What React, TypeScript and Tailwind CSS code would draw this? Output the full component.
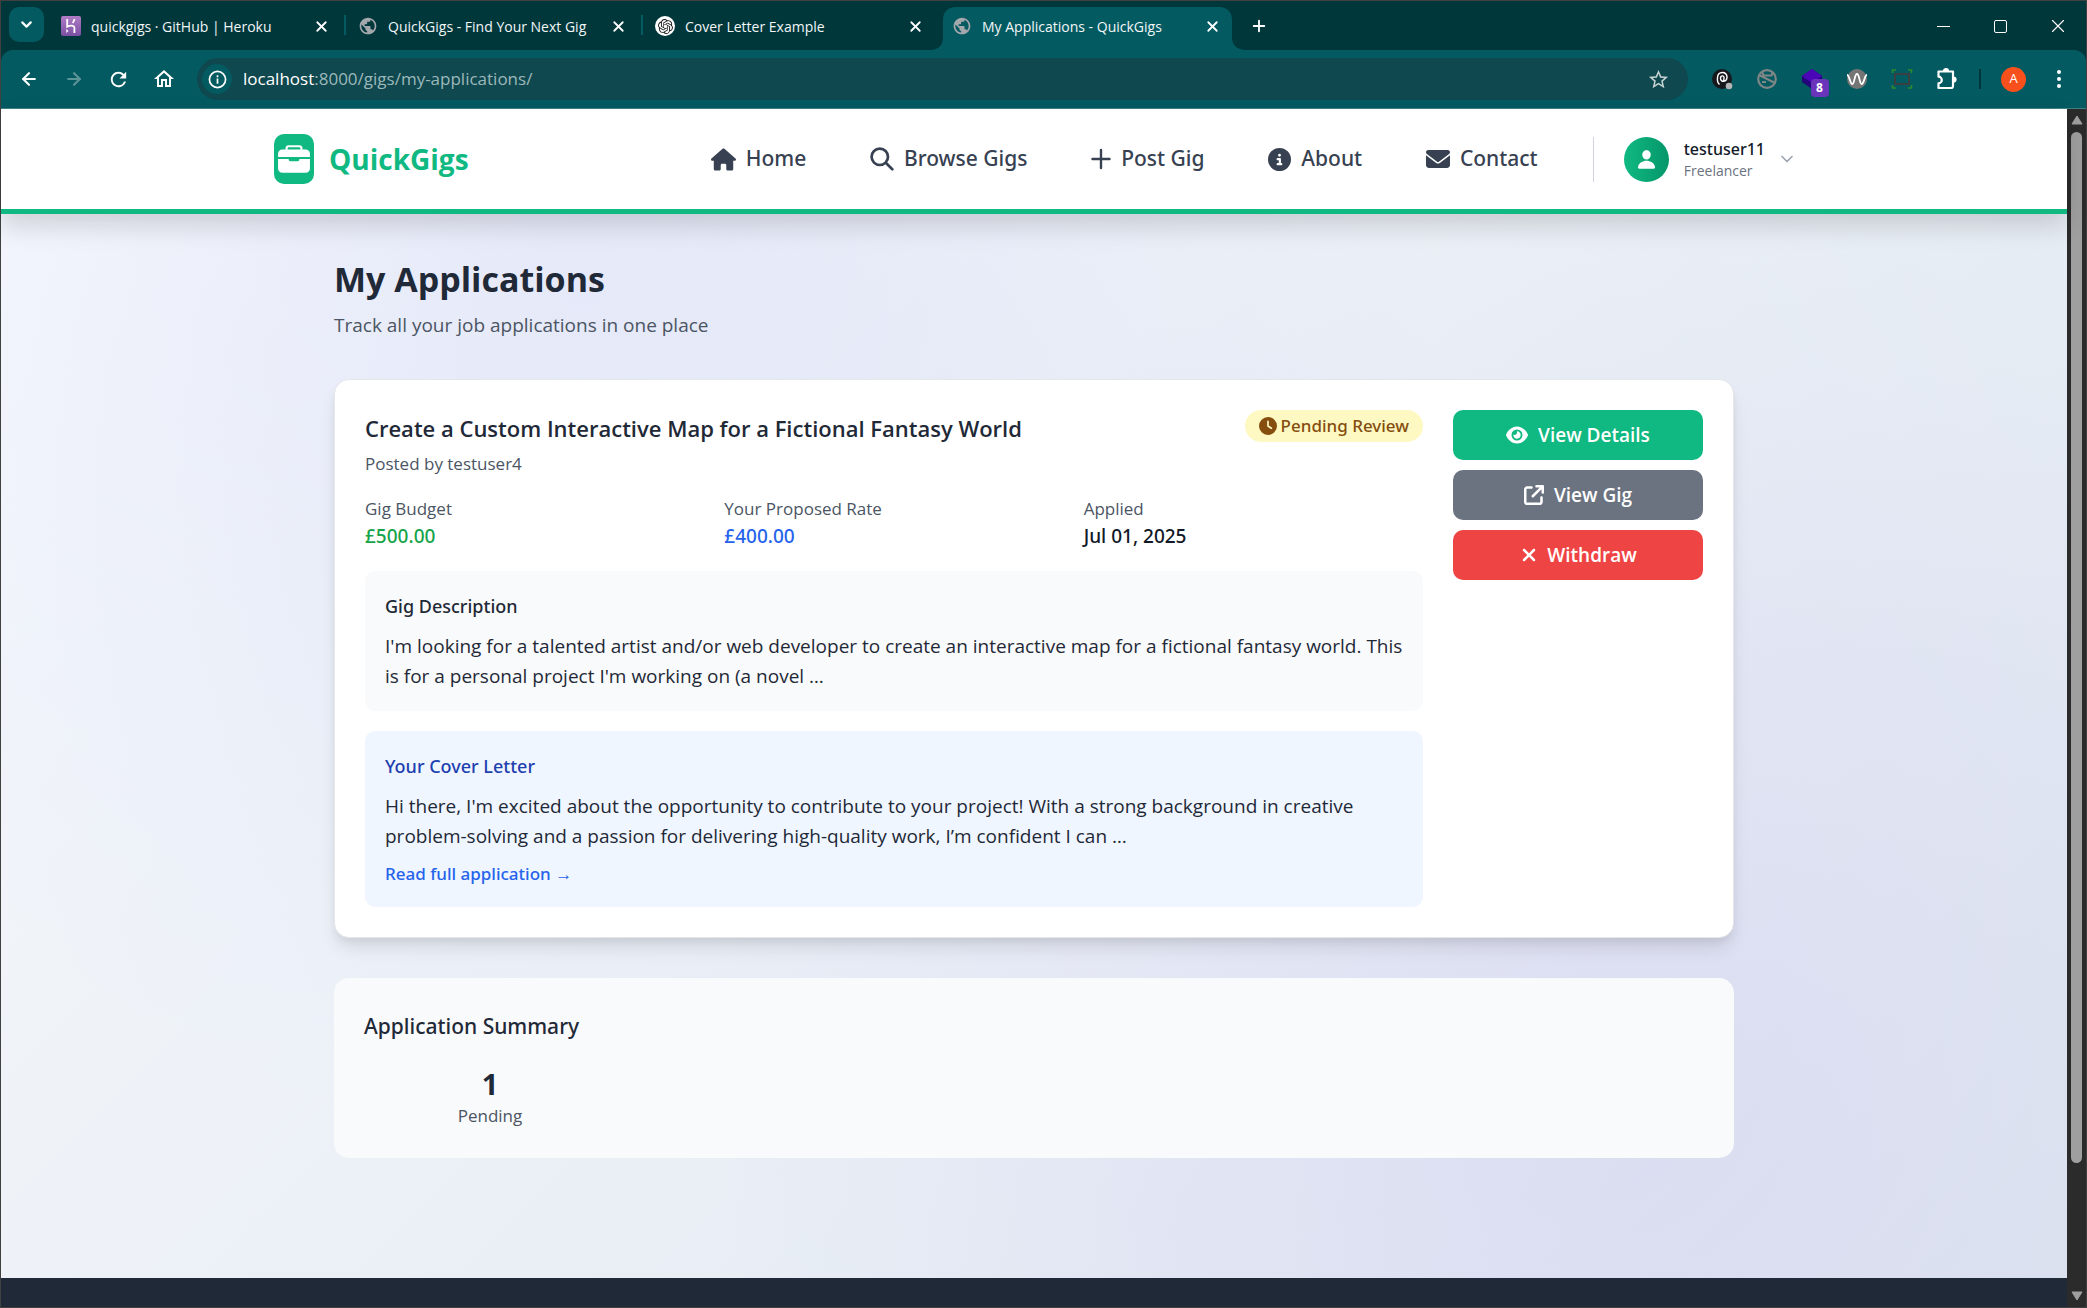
import type { ReactNode } from "react";
import {
  FaHouse,
  FaCircleInfo,
  FaEnvelope,
  FaXmark,
  FaEye,
  FaClock,
  FaArrowUpRightFromSquare,
} from "react-icons/fa6";
import { IoBriefcase, IoPerson } from "react-icons/io5";
import { SiOpenai } from "react-icons/si";
import { MdPublic, MdOutlineHome, MdRefresh, MdStarOutline } from "react-icons/md";
import { ArrowLeft, ArrowRight, ChevronDown, Plus, X } from "lucide-react";

function HerokuIcon() {
  return (
    <svg viewBox="0 0 20 20" className="size-5">
      <defs>
        <linearGradient id="heroku" x1="0" y1="0" x2="0" y2="1">
          <stop offset="0" stopColor="#b07cc6" />
          <stop offset="1" stopColor="#7a4fa3" />
        </linearGradient>
      </defs>
      <rect width="20" height="20" rx="2" fill="url(#heroku)" />
      <g fill="none" stroke="#fff" strokeWidth="1.8">
        <path d="M6.2 3v7.8c2-1 7.2-2.2 7.2 1V17" />
        <path d="M13.4 3c0 1.6-.8 2.900-1.800 4" />
      </g>
      <path d="M5.300 13v4l2.200-2z" fill="#fff" />
    </svg>
  );
}

function Globe() {
  return <MdPublic className="size-[22px] text-[#a3a8ad]" />;
}

type TabProps = { icon: ReactNode; title: string; active?: boolean; divider?: boolean };

function BrowserTab({ icon, title, active, divider }: TabProps) {
  return (
    <div className="relative flex h-[43px] w-[297px] shrink-0 items-start">
      {active && (
        <svg viewBox="0 0 316 43" className="absolute -left-[10px] top-0 h-[43px] w-[316px]" preserveAspectRatio="none">
          <path d="M0 43c9 0 13-5 13-13V13C13 5 18 0 26 0h263c8 0 13 5 13 13v17c0 8 5 13 14 13z" fill="#045a61" />
        </svg>
      )}
      <div className="relative flex h-[38px] w-full items-center pl-3">
        <span className="flex size-5 items-center justify-center">{icon}</span>
        <span className="ml-[10px] flex-1 truncate text-[14px] text-[#f1f6f7]">{title}</span>
        <button aria-label={`Close ${title}`} className="mr-4 text-white">
          <X size={17} strokeWidth={2.5} />
        </button>
      </div>
      {divider && <span className="absolute right-0 top-2 h-5 w-[2px] bg-[#045a61]" />}
    </div>
  );
}

function Slot({ label, children }: { label: string; children: ReactNode }) {
  return (
    <button aria-label={label} className="flex h-[42px] w-[45px] shrink-0 items-center justify-center">
      {children}
    </button>
  );
}

function TabStrip() {
  return (
    <div className="flex h-[50px] shrink-0 items-start border-t border-[#404040] bg-[#00373b] pl-2 pt-[6px]">
      <button aria-label="Search tabs" className="flex h-[35px] w-[35px] items-center justify-center rounded-[10px] bg-[#045a61] text-white">
        <ChevronDown size={17} strokeWidth={3} />
      </button>
      <div className="ml-[5px] flex">
        <BrowserTab icon={<HerokuIcon />} title="quickgigs · GitHub | Heroku" divider />
        <BrowserTab icon={<Globe />} title="QuickGigs - Find Your Next Gig" divider />
        <BrowserTab
          icon={
            <span className="flex size-5 items-center justify-center rounded-full bg-white text-[#222]">
              <SiOpenai className="size-[15px]" />
            </span>
          }
          title="Cover Letter Example"
        />
        <BrowserTab icon={<Globe />} title="My Applications - QuickGigs" active />
      </div>
      <button aria-label="New tab" className="ml-[13px] flex h-[38px] items-center text-white">
        <Plus size={18} strokeWidth={2.5} />
      </button>
      <div className="ml-auto flex text-white">
        <button aria-label="Minimize" className="flex h-[38px] w-[57px] items-center justify-center">
          <span className="h-px w-[13px] bg-white" />
        </button>
        <button aria-label="Maximize" className="flex h-[38px] w-[57px] items-center justify-center">
          <span className="size-[13px] rounded-[2px] border border-white" />
        </button>
        <button aria-label="Close window" className="flex h-[38px] w-[57px] items-center justify-center">
          <X size={22} strokeWidth={1.2} />
        </button>
      </div>
    </div>
  );
}

function Toolbar() {
  return (
    <div className="bg-[#00373b]">
      <div className="flex h-[59px] items-center rounded-t-[12px] border-b border-[#3c8186] bg-[#045a61] px-[5px] text-white">
        <Slot label="Back"><ArrowLeft size={20} strokeWidth={2.5} /></Slot>
        <Slot label="Forward"><ArrowRight size={20} strokeWidth={2.5} className="text-[#5e9599]" /></Slot>
        <Slot label="Reload"><MdRefresh size={23} /></Slot>
        <Slot label="Home"><MdOutlineHome size={24} /></Slot>
        <div className="ml-[11px] mr-[11px] flex h-[42px] flex-1 items-center rounded-full bg-[#0f484e] pl-[5px]">
          <button aria-label="Site information" className="flex size-[30px] items-center justify-center rounded-full bg-[#045a61]">
            <svg viewBox="0 0 20 20" className="size-[19px]" fill="none" stroke="#fff" strokeWidth="1.8">
              <circle cx="10" cy="10" r="8.5" />
              <path d="M10 9v5.500M10 5.500v2" />
            </svg>
          </button>
          <p className="ml-[11px] flex-1 text-[17px] text-[#9db8bb]">
            <span className="text-white">localhost</span>:8000/gigs/my-applications/
          </p>
          <button aria-label="Bookmark this page" className="mr-[18px] text-[#c5d2d3]">
            <MdStarOutline size={23} />
          </button>
        </div>
        <Slot label="Grammar extension">
          <svg viewBox="0 0 24 24" className="size-6" fill="none" stroke="#fff" strokeWidth="1.4">
            <circle cx="12" cy="12" r="10" fill="#17181c" stroke="none" />
            <path d="M9.500 17.500c-2-1.500-2.300-4-2-7 .4-6.500 9.500-6.500 9.500-.5 0 5.500-6.500 5.500-6.500 1.200 0-3.200 3.800-3 3.500-.2l-.2 2.500" />
            <circle cx="19" cy="19" r="3.300" fill="#b5b5b5" stroke="none" />
          </svg>
        </Slot>
        <Slot label="Blocker extension">
          <svg viewBox="0 0 24 24" className="size-6" fill="none" stroke="#7f8686" strokeWidth="2.2">
            <circle cx="12" cy="12" r="8.800" />
            <path d="M5 8.500l14 7M7.500 5.500l1 3h8l1-3M7 15h4" />
          </svg>
        </Slot>
        <Slot label="Stack extension, 8 items">
          <span className="relative block size-6">
            <svg viewBox="0 0 24 24" className="size-6">
              <path d="M2 9l10-7 10 7v6l-10 7-10-7z" fill="#22057a" />
              <path d="M2 9l10-7 10 7-10 7z" fill="#4b06b8" />
            </svg>
            <span className="absolute left-[11px] top-[12px] flex h-[18px] w-[18px] items-center justify-center rounded-[4px] bg-[#6b35bb] text-[12px] font-bold leading-none">
              8
            </span>
          </span>
        </Slot>
        <Slot label="Wave extension">
          <svg viewBox="0 0 24 24" className="size-6" fill="none">
            <circle cx="12" cy="12" r="10" fill="#757575" />
            <path d="M2 8c2.500 0 3 9 5.300 9S9.500 7 12 7s2.400 10 4.700 10S19.500 8 22 8" stroke="#fff" strokeWidth="1.8" />
          </svg>
        </Slot>
        <Slot label="Capture extension">
          <svg viewBox="0 0 24 24" className="size-6" fill="none">
            <rect x="5" y="7" width="14" height="10" stroke="#3a3f42" strokeWidth="2" />
            <path d="M2.500 6V3H6M18 3h3.500v3M2.500 18v3H6M18 21h3.500v-3" stroke="#2f8a2c" strokeWidth="1.6" />
          </svg>
        </Slot>
        <Slot label="Extensions">
          <svg viewBox="0 0 24 24" className="size-6" fill="none" stroke="#fff" strokeWidth="2.2" strokeLinejoin="round">
            <path d="M3.500 4.500h14.500v14.500a2 2 0 0 1-2 2H3.500v-4.700a3.300 3.300 0 0 0 0-6.600z" />
            <path d="M8.800 4a2.200 2.200 0 0 1 4.400 0zM19 10.300a2.200 2.200 0 0 1 0 4.400z" fill="#fff" stroke="none" />
            <path d="M9 4a2 2 0 0 1 4 0M18.500 10.500a2 2 0 0 1 0 4" />
          </svg>
        </Slot>
        <span className="mx-[10px] h-5 w-[2px] bg-[#00373b]" />
        <Slot label="Profile A">
          <span className="flex size-[25px] items-center justify-center rounded-full bg-[#f8501c] text-[13px]">A</span>
        </Slot>
        <Slot label="Menu">
          <span className="flex flex-col gap-[3px]">
            <i className="size-1 rounded-full bg-white" />
            <i className="size-1 rounded-full bg-white" />
            <i className="size-1 rounded-full bg-white" />
          </span>
        </Slot>
      </div>
    </div>
  );
}

function SearchIcon({ size }: { size: number }) {
  return (
    <svg width={size} height={size} viewBox="0 0 24 24" fill="none" stroke="currentColor" strokeWidth="2.7" strokeLinecap="round">
      <circle cx="9.800" cy="9.800" r="8.200" />
      <path d="M16 16l6.300 6.300" />
    </svg>
  );
}

function PlusIcon({ size }: { size: number }) {
  return (
    <svg width={size - 4} height={size} viewBox="0 0 20 24" fill="none" stroke="currentColor" strokeWidth="2.4" strokeLinecap="round">
      <path d="M10 3v18M1.500 12h17" />
    </svg>
  );
}

const navItems = [
  { label: "Home", Icon: FaHouse, size: 25 },
  { label: "Browse Gigs", Icon: SearchIcon, size: 24 },
  { label: "Post Gig", Icon: PlusIcon, size: 24 },
  { label: "About", Icon: FaCircleInfo, size: 23 },
  { label: "Contact", Icon: FaEnvelope, size: 24 },
];

function SiteHeader() {
  return (
    <header className="relative border-b-[5px] border-[#10b981] bg-white shadow-[0_12px_24px_rgba(0,0,0,0.14)]">
      <div className="mx-auto flex h-[100px] max-w-[1600px] items-center px-10">
        <a href="#home" className="flex items-center">
          <span className="flex h-[50px] w-10 items-center justify-center rounded-[10px] bg-[#10b981] text-white">
            <IoBriefcase size={34} />
          </span>
          <span className="ml-[15px] text-[28px] font-bold text-[#10b981]">QuickGigs</span>
        </a>
        <nav className="ml-auto mr-[55px] flex w-[827px] justify-between">
          {navItems.map(({ label, Icon, size }) => (
            <a key={label} href="#nav" className="flex items-center gap-[10px] font-['Noto_Sans'] text-[21px] font-medium text-[#374151]">
              <Icon size={size} />
              {label}
            </a>
          ))}
        </nav>
        <button className="flex items-center text-left">
          <span className="h-[45px] w-px bg-[#d1d5db]" />
          <span className="ml-[30px] flex size-[45px] items-center justify-center rounded-full bg-linear-to-r from-[#10b981] to-[#059669] text-white">
            <IoPerson size={21} />
          </span>
          <span className="ml-[15px] flex flex-col pt-[2px]">
            <span className="font-['Noto_Sans'] text-[16px] font-medium leading-[22px] text-[#111827]">testuser11</span>
            <span className="text-[14px] leading-[22px] text-[#6b7280]">Freelancer</span>
          </span>
          <ChevronDown size={20} className="-mr-[3px] ml-[12px] text-[#9ca3af]" />
        </button>
      </div>
    </header>
  );
}

const facts = [
  { label: "Gig Budget", value: "£500.00", color: "text-[#16a34a]" },
  { label: "Your Proposed Rate", value: "£400.00", color: "text-[#2563eb]" },
  { label: "Applied", value: "Jul 01, 2025", color: "text-[#111827]" },
];

function ApplicationCard() {
  return (
    <article className="flex gap-[30px] rounded-[15px] border border-[#e5e7eb] bg-white p-[30px] shadow-[0_12px_18px_-3px_rgba(0,0,0,0.1),0_5px_8px_-2px_rgba(0,0,0,0.06)]">
      <div className="min-w-0 flex-1">
        <div className="flex items-start justify-between">
          <div>
            <h2 className="text-[22px] font-semibold leading-[36px] text-[#1f2937]">
              Create a Custom Interactive Map for a Fictional Fantasy World
            </h2>
            <p className="mt-[5px] text-[17px] leading-[25px] text-[#4b5563]">Posted by testuser4</p>
          </div>
          <span className="flex items-center gap-1 rounded-full bg-[#fef9c3] px-[14px] font-['Noto_Sans'] text-[17px] font-medium leading-[32px] text-[#854d0e]">
            <FaClock size={18} />
            Pending Review
          </span>
        </div>
        <dl className="mt-5 grid grid-cols-3 gap-5">
          {facts.map((f) => (
            <div key={f.label}>
              <dt className="text-[17px] leading-[25px] text-[#4b5563]">{f.label}</dt>
              <dd className={`font-['Noto_Sans'] text-[19px] font-medium leading-[30px] ${f.color}`}>{f.value}</dd>
            </div>
          ))}
        </dl>
        <section className="mt-5 rounded-[10px] bg-[#f9fafb] p-5">
          <h3 className="font-['Noto_Sans'] text-[18px] font-medium leading-[30px] text-[#1f2937]">Gig Description</h3>
          <p className="mt-[10px] text-[19px] leading-[30px] text-[#1f2937]">
            I'm looking for a talented artist and/or web developer to create an interactive map for a fictional fantasy
            world. This is for a personal project I'm working on (a novel …
          </p>
        </section>
        <section className="mt-5 rounded-[10px] bg-[#eff6ff] p-5">
          <h3 className="font-['Noto_Sans'] text-[18px] font-medium leading-[30px] text-[#1e40af]">Your Cover Letter</h3>
          <p className="mt-[10px] text-[19px] leading-[30px] text-[#1f2937]">
            Hi there, I'm excited about the opportunity to contribute to your project! With a strong background in
            creative problem-solving and a passion for delivering high-quality work, I’m confident I can …
          </p>
          <a href="#application" className="mt-[10px] block font-['Noto_Sans'] text-[17px] font-medium leading-[26px] text-[#2563eb]">
            Read full application →
          </a>
        </section>
      </div>
      <div className="flex w-[250px] shrink-0 flex-col gap-[10px] text-[19px] font-semibold text-white">
        <button className="flex h-[50px] items-center justify-center gap-[10px] rounded-[10px] bg-[#10b981]">
          <FaEye size={22} />
          View Details
        </button>
        <button className="flex h-[50px] items-center justify-center gap-[10px] rounded-[10px] bg-[#6b7280]">
          <FaArrowUpRightFromSquare size={20} />
          View Gig
        </button>
        <button className="flex h-[50px] items-center justify-center gap-[8px] rounded-[10px] bg-[#ef4444]">
          <FaXmark size={20} />
          Withdraw
        </button>
      </div>
    </article>
  );
}

function Summary() {
  return (
    <section className="mt-10 rounded-[15px] bg-[#f9fafb] p-[30px]">
      <h2 className="font-['Noto_Sans'] text-[21px] font-medium leading-[36px] text-[#1f2937]">Application Summary</h2>
      <div className="mt-5 grid grid-cols-5 gap-5 text-center">
        <div>
          <p className="text-[29px] font-bold leading-[40px] text-[#1f2937]">1</p>
          <p className="text-[17px] leading-[24px] text-[#4b5563]">Pending</p>
        </div>
      </div>
    </section>
  );
}

function Scrollbar() {
  return (
    <div className="flex w-[19px] shrink-0 flex-col items-center bg-[#2b2b2b] py-[6px]">
      <svg viewBox="0 0 12 10" className="h-[10px] w-3 shrink-0">
        <path d="M6 1l5 8H1z" fill="#9f9f9f" stroke="#9f9f9f" strokeLinejoin="round" />
      </svg>
      <div className="mt-[7px] w-[11px] grow-[1032] rounded-full bg-[#9f9f9f]" />
      <div className="grow-[128]" />
      <svg viewBox="0 0 12 10" className="h-[10px] w-3 shrink-0">
        <path d="M6 9l5-8H1z" fill="#9f9f9f" stroke="#9f9f9f" strokeLinejoin="round" />
      </svg>
    </div>
  );
}

export default function App() {
  return (
    <div className="flex min-h-screen flex-col border-x border-b border-[#404040] bg-[#00373b] font-['Open_Sans','Noto_Sans',sans-serif]">
      <TabStrip />
      <Toolbar />
      <div className="flex flex-1">
        <div className="flex min-w-0 flex-1 flex-col bg-[radial-gradient(circle_at_28%_15%,rgba(130,130,245,0.1),transparent_48%),radial-gradient(circle_at_78%_82%,rgba(150,120,235,0.11),transparent_48%),linear-gradient(135deg,#f6f9fc,#dfe6f0)]">
          <SiteHeader />
          <main className="mx-auto w-full max-w-[1400px] pb-[120px] pt-10">
            <h1 className="text-[34px] font-bold leading-[50px] text-[#1f2937]">My Applications</h1>
            <p className="mb-[39px] mt-[6px] text-[19px] leading-[30px] text-[#4b5563]">Track all your job applications in one place</p>
            <ApplicationCard />
            <Summary />
          </main>
          <footer className="min-h-[28px] flex-1 bg-[#1f2937]" />
        </div>
        <Scrollbar />
      </div>
    </div>
  );
}
